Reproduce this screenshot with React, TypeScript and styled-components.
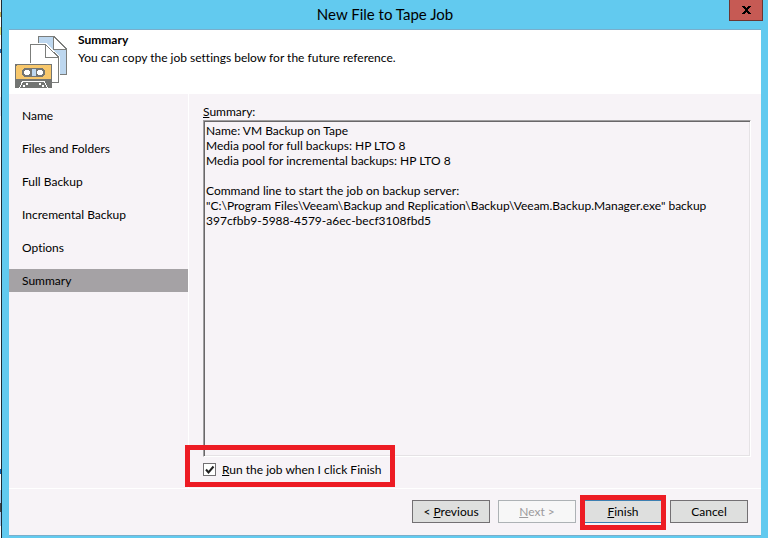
import React from "react";
import styled, { createGlobalStyle, css } from "styled-components";

const GlobalStyle = createGlobalStyle`
  * { box-sizing: border-box; }
  body { margin: 0; background: #62caef; }
  body, button, textarea, input {
    font-family: Lato, "Open Sans", sans-serif;
    font-size: 12px;
    line-height: 15px;
    font-variant-ligatures: none;
    color: #000;
  }
`;

const Screen = styled.div`
  display: flex;
  min-height: 100vh;
`;

const DesktopEdge = styled.div`
  flex: none;
  width: 2px;
  border-right: 1px solid #1c2b36;
  background: linear-gradient(
    #f4efe2 0 12px, #c8b35a 12px 17px, #fff 17px 27px, #e8e37c 27px 35px, #fff 35px 49px,
    #2a6db0 49px 53px, #fff 53px 97px, #dfeafa 97px 116px, #fff 116px 469px, #0b62b4 469px 474px,
    #fff 474px 490px, #a9cdf2 490px 503px, #444 503px 512px, #a9cdf2 512px 526px, #fff 526px
  );
`;

const Dialog = styled.main`
  flex: 1;
  min-width: 0;
  display: flex;
  flex-direction: column;
  padding: 0 7px 2px;
  background: #62caef;
`;

const TitleBar = styled.header`
  display: grid;
  grid-template-columns: 32px 1fr 32px;
  align-items: start;
  height: 29px;
`;

const Title = styled.h1`
  grid-column: 2;
  margin: 0;
  padding-top: 4px;
  text-align: center;
  font-size: 15px;
  line-height: 20px;
  font-weight: 400;
`;

const CloseButton = styled.button`
  display: flex;
  align-items: center;
  justify-content: center;
  width: 34px;
  height: 21px;
  padding: 0;
  border: 1px solid #6b3531;
  border-top: 0;
  background: #c65a54;
`;

const Panel = styled.form`
  flex: 1;
  display: flex;
  flex-direction: column;
  border-top: 1px solid #79aecb;
  border-bottom: 1px solid #79aecb;
  background: #f7f3f7;
`;

const Banner = styled.div`
  display: flex;
  gap: 10px;
  height: 64px;
  padding: 4px 5px;
  background: #fff;
`;

const BannerCopy = styled.div`
  display: flex;
  flex-direction: column;
  line-height: 18px;
  margin-top: -3px;
`;

const BannerTitle = styled.h2`
  margin: 0;
  font-size: 12px;
  font-weight: 700;
`;

const BannerText = styled.p`
  margin: 0;
`;

const Content = styled.div`
  flex: 1;
  display: flex;
  border-bottom: 1px solid #fff;
`;

const Steps = styled.nav`
  flex: none;
  display: flex;
  flex-direction: column;
  gap: 10px;
  width: 180px;
  padding-top: 10px;
  border-right: 1px solid #fff;
`;

const Step = styled.a<{ $current?: boolean }>`
  padding: 4px 13px;
  color: #000;
  text-decoration: none;
  background: ${(p) => (p.$current ? "#a5a2a5" : "transparent")};
`;

const Details = styled.section`
  flex: 1;
  display: flex;
  flex-direction: column;
  padding: 10px 10px 11px 14px;
`;

const FieldLabel = styled.label`
  height: 16px;
`;

const SummaryText = styled.textarea`
  flex: 1;
  width: 100%;
  margin: 0 0 5px;
  padding: 2px;
  border: 1px solid;
  border-color: #a09ea0 #fff #fff #a09ea0;
  outline: 0;
  box-shadow: inset 1px 1px #696769, inset -1px -1px #e5e2e5;
  background: #f7f3f7;
  resize: none;
`;

const highlight = css`
  position: absolute;
  border: 5px solid #ed1c24;
  content: "";
  pointer-events: none;
`;

const CheckLabel = styled.label`
  position: relative;
  align-self: flex-start;
  display: flex;
  align-items: center;
  gap: 6px;
  &::after {
    ${highlight}
    inset: -17px -14px -10px -18px;
  }
`;

const CheckBox = styled.span`
  position: relative;
  display: flex;
  width: 13px;
  height: 13px;
  svg {
    position: absolute;
    inset: 0;
    pointer-events: none;
  }
  input:not(:checked) + svg {
    display: none;
  }
`;

const CheckInput = styled.input`
  appearance: none;
  width: 13px;
  height: 13px;
  margin: 0;
  border: 1px solid #737073;
  background: #fff;
`;

const Actions = styled.footer`
  display: flex;
  justify-content: flex-end;
  gap: 8px;
  padding: 11px 13px 12px;
`;

const ActionButton = styled.button<{ $primary?: boolean }>`
  position: relative;
  width: 78px;
  height: 23px;
  padding: 0;
  border: 1px solid ${(p) => (p.$primary ? "#3c7fb1" : "#737073")};
  background: #dedfde;
  &:disabled {
    border-color: #adb2b5;
    background: #f7f7f7;
    color: #9c9a9c;
  }
  ${(p) =>
    p.$primary &&
    css`
      &::after {
        ${highlight}
        inset: -6px -5px -8px;
      }
    `}
`;

const TapeJobIcon = () => (
  <svg width="54" height="54" viewBox="0 0 54 54" shapeRendering="crispEdges" aria-hidden="true">
    <path d="M24.5 2.5H40L52.5 15V40.5H24.5Z" fill="#bdd7ef" stroke="#7b7d7b" />
    <path d="M40 3V15.5H52Z" fill="#fff" />
    <path d="M39.5 2.5V15.5H52.5" fill="none" stroke="#7b7d7b" />
    <path d="M40 2.5L52.5 15" fill="none" stroke="#7b7d7b" />
    <path d="M15 9H32L46 23V50H15Z" fill="#fff" />
    <path d="M16.5 30V10.5H31.5L44.5 23V48.5H38" fill="#fff" stroke="#7b7d7b" />
    <path d="M31.5 10.5V23.5H44.5" fill="none" stroke="#7b7d7b" />
    <path d="M0 29H38V54H0Z" fill="#fff" />
    <path d="M1 30H38V54H1Z" fill="#737573" />
    <path d="M3 31H36L37 32V45H2V32Z" fill="#f7c76b" />
    <rect x="8" y="34" width="23" height="9" rx="4" fill="#737573" />
    <path d="M18 35H22V42H18Z" fill="#bdd7ef" />
    <circle cx="13" cy="38.5" r="3" fill="#fff" />
    <circle cx="26" cy="38.5" r="3" fill="#fff" />
    <path d="M5.5 54L8.5 47.5H30.5L33.5 54" fill="none" stroke="#fff" />
    <path d="M12 49h2v2h-2zM25 49h2v2h-2zM9 51h2v2h-2zM28 51h2v2h-2z" fill="#fff" />
  </svg>
);

const steps = ["Name", "Files and Folders", "Full Backup", "Incremental Backup", "Options", "Summary"];

const summary = `Name: VM Backup on Tape
Media pool for full backups: HP LTO 8
Media pool for incremental backups: HP LTO 8

Command line to start the job on backup server:
"C:\\Program Files\\Veeam\\Backup and Replication\\Backup\\Veeam.Backup.Manager.exe" backup
397cfbb9-5988-4579-a6ec-becf3108fbd5`;

export default function App() {
  return (
    <Screen>
      <GlobalStyle />
      <DesktopEdge />
      <Dialog>
        <TitleBar>
          <Title>New File to Tape Job</Title>
          <CloseButton type="button" aria-label="Close">
            <svg width="9" height="8" viewBox="0 0 9 8" shapeRendering="crispEdges" aria-hidden="true">
              <path
                d="M0 0h3v1h1v1h1V1h1V0h3v1H8v1H7v1H6v2h1v1h1v1h1v1H6V7H5V6H4v1H3v1H0V7h1V6h1V5h1V3H2V2H1V1H0z"
                fill="#000"
              />
            </svg>
          </CloseButton>
        </TitleBar>
        <Panel onSubmit={(e) => e.preventDefault()}>
          <Banner>
            <TapeJobIcon />
            <BannerCopy>
              <BannerTitle>Summary</BannerTitle>
              <BannerText>You can copy the job settings below for the future reference.</BannerText>
            </BannerCopy>
          </Banner>
          <Content>
            <Steps>
              {steps.map((step) => (
                <Step
                  key={step}
                  href="#"
                  $current={step === "Summary"}
                  aria-current={step === "Summary" ? "step" : undefined}
                >
                  {step}
                </Step>
              ))}
            </Steps>
            <Details>
              <FieldLabel htmlFor="summary">
                <u>S</u>ummary:
              </FieldLabel>
              <SummaryText id="summary" readOnly spellCheck={false} defaultValue={summary} />
              <CheckLabel htmlFor="run">
                <CheckBox>
                  <CheckInput id="run" type="checkbox" defaultChecked />
                  <svg width="13" height="13" viewBox="0 0 13 13" aria-hidden="true">
                    <path d="M3 6.5L5.5 9.5L10.5 3.5" fill="none" stroke="#212021" strokeWidth="2" />
                  </svg>
                </CheckBox>
                <span>
                  <u>R</u>un the job when I click Finish
                </span>
              </CheckLabel>
            </Details>
          </Content>
          <Actions>
            <ActionButton type="button">
              &lt; <u>P</u>revious
            </ActionButton>
            <ActionButton type="button" disabled>
              <u>N</u>ext &gt;
            </ActionButton>
            <ActionButton type="submit" $primary>
              <u>F</u>inish
            </ActionButton>
            <ActionButton type="button">Cancel</ActionButton>
          </Actions>
        </Panel>
      </Dialog>
    </Screen>
  );
}
